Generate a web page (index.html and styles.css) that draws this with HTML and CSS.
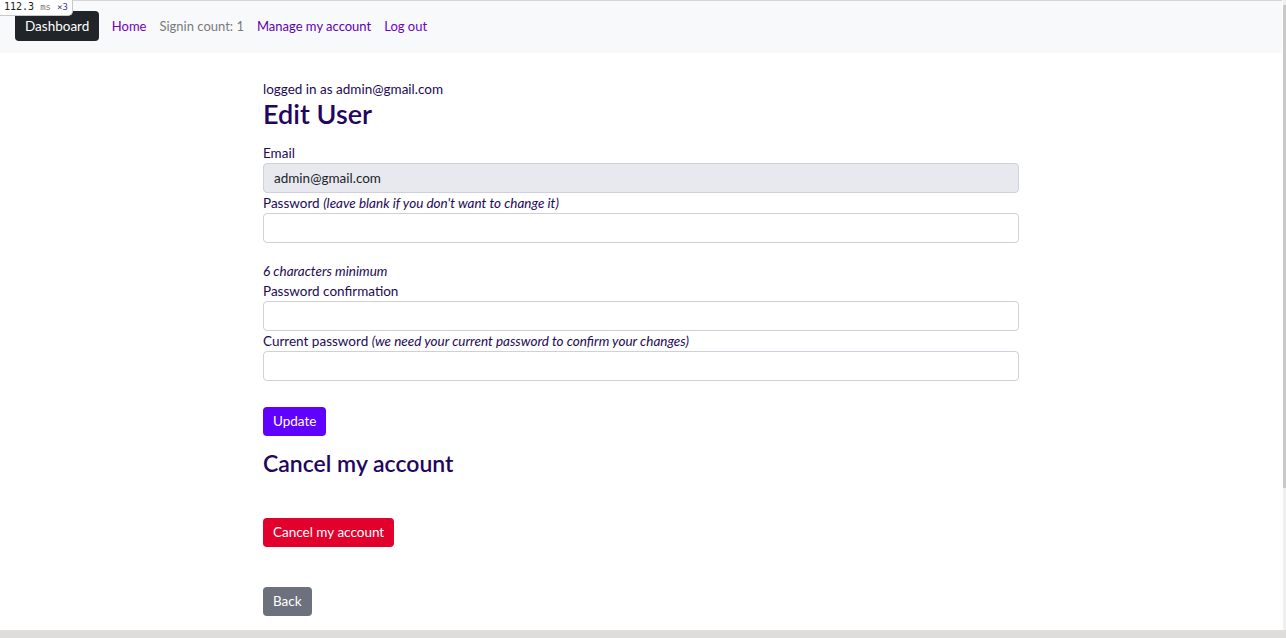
FILE: index.html
```html
<!DOCTYPE html>
<html lang="en">
<head>
<meta charset="utf-8">
<title>Edit User</title>
<link rel="stylesheet" href="styles.css">
</head>
<body>
<div class="window">
  <div class="page">
    <nav class="navbar">
      <a class="brand" href="#">Dashboard</a>
      <a class="nav-link" href="#">Home</a>
      <span class="nav-text">Signin count: 1</span>
      <a class="nav-link link-dark" href="#">Manage my account</a>
      <a class="nav-link" href="#">Log out</a>
    </nav>
    <main class="container">
      <p class="logged">logged in as admin@gmail.com</p>
      <h2 class="title">Edit User</h2>
      <form class="form">
        <label class="label">Email</label>
        <div class="input readonly">admin@gmail.com</div>
        <label class="label">Password <i>(leave blank if you don't want to change it)</i></label>
        <div class="input"></div>
        <em class="hint">6 characters minimum</em>
        <label class="label">Password confirmation</label>
        <div class="input"></div>
        <label class="label">Current password <i>(we need your current password to confirm your changes)</i></label>
        <div class="input"></div>
        <div class="actions"><button type="button" class="btn btn-update">Update</button></div>
      </form>
      <h3 class="subtitle">Cancel my account</h3>
      <div class="actions-cancel"><button type="button" class="btn btn-danger">Cancel my account</button></div>
      <div class="actions-back"><a class="btn btn-back" href="#">Back</a></div>
    </main>
  </div>
  <div class="vscroll"><div class="vthumb"></div></div>
</div>
<div class="hscroll"></div>
<div class="profiler"><span class="ms-num">112.3</span> <span class="ms-unit">ms</span> <span class="ms-x">×3</span></div>
</body>
</html>
```
FILE: styles.css
```css
html, body {
  margin: 0;
  padding: 0;
  height: 638px;
  overflow: hidden;
  background: #ffffff;
}
body {
  font-family: "Lato", "Noto Sans", sans-serif;
  font-size: 13.5px;
  color: #230a55;
  position: relative;
}
.window {
  display: flex;
  height: 630px;
}
.page {
  flex: 1;
  overflow: hidden;
  padding-right: 1px;
}
.vscroll {
  width: 3px;
  background: #efefef;
  padding-top: 5px;
}
.vthumb {
  height: 483px;
  background: #c9c9c9;
}
.hscroll {
  height: 8px;
  background: #dedddb;
}

.navbar {
  border-top: 1px solid #d6d6d6;
  background: #f8f9fa;
  height: 53px;
  box-sizing: border-box;
  padding: 9px 15px 12px;
  display: flex;
  align-items: center;
}
.brand {
  background: #212529;
  color: #ffffff;
  text-decoration: none;
  border-radius: 4px;
  height: 30px;
  line-height: 30px;
  padding: 0 10px;
  font-size: 13.5px;
  margin-right: 6px;
}
.nav-link, .nav-text {
  padding: 0 6.5px;
  font-size: 13px;
  text-decoration: none;
  color: #7000c4;
}
.nav-text {
  color: #7a7a7a;
}
.link-dark {
  color: #5c00b3;
}

.container {
  width: 756px;
  margin: 0 auto;
  padding-top: 26px;
}
.logged {
  margin: 0;
  line-height: 20px;
}
.title {
  margin: 0 0 14px;
  font-size: 27px;
  line-height: 30px;
  font-weight: 600;
  color: #22055e;
}
.form {
  display: flex;
  flex-direction: column;
  align-items: stretch;
}
.label {
  line-height: 20px;
  display: block;
}
.label i, .hint {
  font-style: italic;
}
.hint {
  margin-top: 18px;
  line-height: 20px;
}
.input {
  height: 30px;
  box-sizing: border-box;
  border: 1px solid #cfd0dc;
  border-radius: 4px;
  background: #ffffff;
  padding: 0 10px;
  line-height: 28px;
  color: #212529;
}
.input.readonly {
  background: #e8e9ee;
}
.actions {
  margin-top: 26px;
}
.btn {
  display: inline-block;
  border: 0;
  border-radius: 4px;
  height: 29px;
  line-height: 29px;
  padding: 0 10px;
  font-family: inherit;
  font-size: 13.5px;
  color: #ffffff;
  text-decoration: none;
  cursor: pointer;
  vertical-align: top;
}
.btn-update {
  background: #6000ff;
}
.btn-danger {
  background: #e2002c;
}
.btn-back {
  background: #6c717d;
}
.subtitle {
  margin: 13px 0 0;
  font-size: 23px;
  line-height: 29px;
  font-weight: 600;
  color: #22055e;
}
.actions-cancel {
  margin-top: 40px;
  height: 29px;
}
.actions-back {
  margin-top: 40px;
  height: 29px;
}

.profiler {
  position: absolute;
  top: 0;
  left: 0;
  background: #ffffff;
  border: 1px solid #c8c8c8;
  border-top: 0;
  border-left: 0;
  border-bottom-right-radius: 5px;
  padding: 0 4px 1px 4px;
  font-family: "DejaVu Sans Mono", "Liberation Mono", monospace;
  font-size: 10px;
  line-height: 14px;
  color: #222222;
  white-space: nowrap;
}
.ms-unit {
  color: #777777;
  font-size: 9px;
}
.ms-x {
  color: #3b3b9b;
  font-size: 9px;
}
```
